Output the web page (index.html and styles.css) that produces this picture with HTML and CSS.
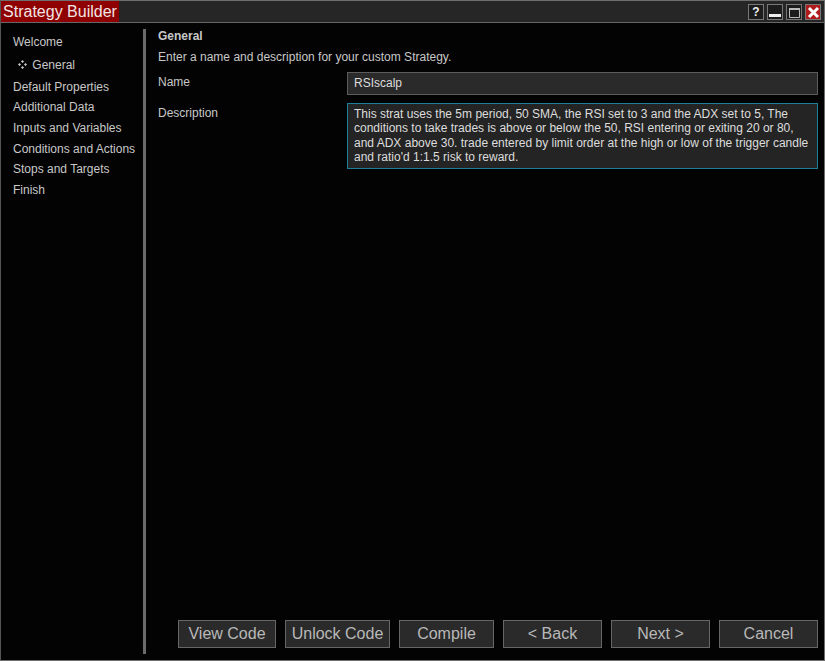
FILE: index.html
```html
<!DOCTYPE html>
<html lang="en">

<head>
    <meta charset="UTF-8">
    <title>Strategy Builder</title>
    <link rel="stylesheet" href="styles.css">
</head>

<body>

    <div id="window">
        <div class="titlebar">
            <div class="title">Strategy Builder</div>
            <div class="window-buttons">
                <button class="win-btn">?</button>
                <button class="win-btn">
                    <svg width="13" height="13" viewBox="0 0 13 13"><rect x="0" y="8" width="12" height="3" fill="#eee" /></svg>
                </button>
                <button class="win-btn">
                    <svg width="13" height="13" viewBox="0 0 13 13"><path d="M1.5 2.5h10v9h-10z M1 3.5h11" fill="none" stroke="#bbb" stroke-width="1" /><rect x="1" y="2" width="11" height="2" fill="#bbb" /></svg>
                </button>
                <button class="win-btn close">
                    <svg width="13" height="13" viewBox="0 0 13 13"><path d="M2 2l9 9M11 2l-9 9" stroke="#fff" stroke-width="3" fill="none" /></svg>
                </button>
            </div>
        </div>

        <div class="content">
            <ul class="nav">
                <li>Welcome</li>
                <li class="current">
                    <svg class="diamonds" width="9" height="9" viewBox="0 0 9 9"><path d="M4.5 0l1.5 1.5-1.5 1.5-1.5-1.5z M1.5 3l1.5 1.5-1.5 1.5-1.5-1.5z M7.5 3l1.5 1.5-1.5 1.5-1.5-1.5z M4.5 6l1.5 1.5-1.5 1.5-1.5-1.5z" fill="#ccc" /></svg>
                    General
                </li>
                <li>Default Properties</li>
                <li>Additional Data</li>
                <li>Inputs and Variables</li>
                <li>Conditions and Actions</li>
                <li>Stops and Targets</li>
                <li>Finish</li>
            </ul>

            <div class="main">
                <div class="heading">General</div>
                <div class="intro">Enter a name and description for your custom Strategy.</div>

                <div class="field">
                    <label>Name</label>
                    <div class="input">RSIscalp</div>
                </div>
                <div class="field">
                    <label>Description</label>
                    <div class="input focused">This strat uses the 5m period, 50 SMA, the RSI set to 3 and the ADX set to 5, The conditions to take trades is above or below the 50, RSI entering or exiting 20 or 80, and ADX above 30. trade entered by limit order at the high or low of the trigger candle and ratio'd 1:1.5 risk to reward.</div>
                </div>

                <div class="actions">
                    <button class="btn view">View Code</button>
                    <button class="btn unlock">Unlock Code</button>
                    <button class="btn compile">Compile</button>
                    <button class="btn back">&lt; Back</button>
                    <button class="btn next">Next &gt;</button>
                    <button class="btn cancel">Cancel</button>
                </div>
            </div>
        </div>
    </div>

</body>

</html>
```

FILE: styles.css
```css
html,
body {
    margin: 0;
    height: 100%;
    background-color: #000;
}

body {
    font-family: "Liberation Sans", Arial, sans-serif;
    font-size: 12px;
    color: #c8c8c8;
}

#window {
    box-sizing: border-box;
    width: 825px;
    height: 661px;
    display: flex;
    flex-direction: column;
    border: 1px solid #6e6e6e;
    border-left-color: #555;
    background-color: #030303;
}

.titlebar {
    flex: none;
    box-sizing: border-box;
    height: 22px;
    display: flex;
    justify-content: space-between;
    background-color: #262626;
    border-bottom: 1px solid #666;
}

.title {
    width: 118px;
    height: 21px;
    background-color: #8f0000;
    color: #f0e6e6;
    font-size: 16px;
    line-height: 21px;
    text-align: center;
    white-space: nowrap;
}

.window-buttons {
    display: flex;
    gap: 3px;
    padding: 3px 3px 0 0;
}

.win-btn {
    box-sizing: border-box;
    width: 16px;
    height: 16px;
    padding: 0;
    display: flex;
    align-items: center;
    justify-content: center;
    background-color: #1c1c1c;
    border: 1px solid #777;
    color: #eee;
    font-family: "Liberation Sans", Arial, sans-serif;
    font-size: 12px;
    font-weight: bold;
}

.win-btn.close {
    background-color: #b01c1c;
}

.content {
    flex: 1;
    display: flex;
    min-height: 0;
    padding: 6px 6px 6px 0;
}

.nav {
    box-sizing: border-box;
    flex: none;
    width: 145px;
    margin: 0;
    padding: 3px 0 0 12px;
    list-style: none;
    border-right: 3px solid #6a6a6a;
}

.nav li {
    height: 20.7px;
    line-height: 20.7px;
    white-space: nowrap;
}

.nav li.current {
    height: 24px;
    line-height: 24px;
    padding-left: 5px;
}

.diamonds {
    margin-right: 2px;
}

.main {
    flex: 1;
    min-width: 0;
    display: flex;
    flex-direction: column;
    padding-left: 12px;
}

.heading {
    font-weight: bold;
    line-height: 14px;
}

.intro {
    margin-top: 7px;
    line-height: 14px;
}

.field {
    display: flex;
    margin-top: 8px;
}

.field label {
    width: 189px;
    flex: none;
    padding-top: 3px;
    line-height: 14px;
}

.input {
    box-sizing: border-box;
    flex: 1;
    min-height: 22px;
    padding: 3px 6px;
    line-height: 14.5px;
    background-color: #2a2a2a;
    border: 1px solid #5c5c5c;
    color: #ddd;
}

.input.focused {
    padding: 3px 6px 3px 6px;
    border-color: #1c7f97;
    background-color: #242424;
}

.actions {
    margin-top: auto;
    margin-bottom: 6px;
    display: flex;
    justify-content: flex-end;
    gap: 9px;
}

.btn {
    box-sizing: border-box;
    height: 28px;
    padding: 0;
    background-color: #2a2a2a;
    border: 1px solid #666;
    color: #b8b8b8;
    font-family: "Liberation Sans", Arial, sans-serif;
    font-size: 16px;
}

.btn.view {
    width: 98px;
}

.btn.unlock {
    width: 105px;
}

.btn.compile {
    width: 95px;
}

.btn.back {
    width: 99px;
}

.btn.next {
    width: 99px;
}

.btn.cancel {
    width: 99px;
}
```
